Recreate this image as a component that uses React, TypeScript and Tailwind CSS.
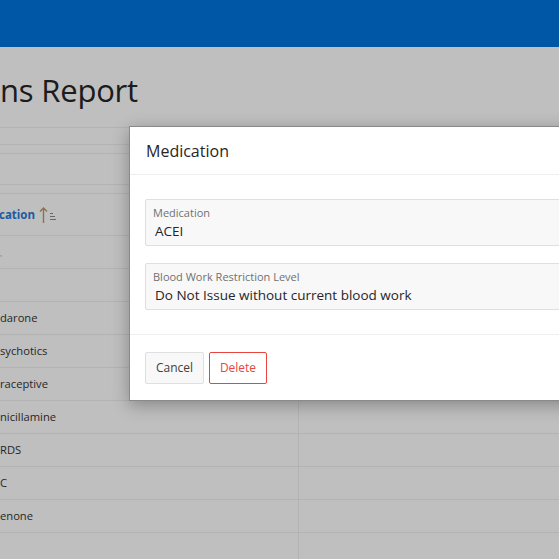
import React from "react";

const rows = ["", "", "darone", "sychotics", "raceptive", "nicillamine", "RDS", "C", "enone", ""];

const Field: React.FC<{ label: string; value: string }> = ({ label, value }) => (
  <div className="h-[47px] border border-[#dfdfdf] bg-[#f8f8f8] rounded-[2px] pl-[7px] pt-[5px]">
    <div className="text-[11px] leading-[16px] text-[#707070]">{label}</div>
    <div className="text-[13.5px] leading-[20px] text-[#262626] pl-[2px]">{value}</div>
  </div>
);

const App: React.FC = () => {
  return (
    <div
      className="relative w-[559px] h-[559px] overflow-hidden bg-white"
      style={{ fontFamily: '"Open Sans", "Noto Sans", sans-serif' }}
    >
      {/* page under the dialog */}
      <div className="h-[47px] bg-[#0074dd]" />
      <div className="h-[80px] flex items-center">
        <h1 className="text-[31px] text-[#262626] pt-[6px] tracking-[-0.2px]">ns Report</h1>
      </div>
      <div className="border-t border-[#efefef] h-[17px]" />
      <div className="border-t border-[#efefef] h-[9px]" />
      <div className="border-t border-[#efefef] h-[31px]" />
      <div className="border-t border-[#efefef] h-[9px]" />
      <div className="border-t border-[#efefef] h-[42px] flex items-center">
        <span className="text-[11.5px] font-bold text-[#2a78d5] -ml-[1px]">cation</span>
        <span className="ml-[4px] text-[#8a8a8a]">
          <svg width="20" height="18" viewBox="0 0 20 18" fill="none" stroke="currentColor" strokeWidth="1.2">
            <path d="M4.5 17V2M1 5.5L4.5 2L8 5.5" stroke="#b49a6a" strokeWidth="1.4" />
            <path d="M11 7.5h3M11 10.5h5M11 13.5h6" />
          </svg>
        </span>
      </div>
      {rows.map((r, i) => (
        <div key={i} className="flex h-[33px] border-t border-[#efefef]">
          <div className="w-[299px] border-r border-[#efefef] flex items-center text-[11.2px] text-[#333]">
            {i === 0 ? <span className="text-[#5ab3b3] text-[8px] mt-[10px]">'</span> : r}
          </div>
          <div className="flex-1" />
        </div>
      ))}

      {/* overlay */}
      <div className="absolute inset-0 bg-black/25" />

      {/* dialog */}
      <div className="absolute left-[129px] top-[126px] w-[560px] h-[275px] bg-white border border-[#8a8a8a] shadow-[0_4px_16px_rgba(0,0,0,0.3)] flex flex-col">
        <div className="h-[48px] flex items-center px-[16px] border-b border-[#eeeeee]">
          <h2 className="text-[16px] text-[#262626]">Medication</h2>
        </div>
        <div className="flex-1 px-[15px] pt-[24px] flex flex-col gap-[17px] border-b border-[#eeeeee]">
          <Field label="Medication" value="ACEI" />
          <Field label="Blood Work Restriction Level" value="Do Not Issue without current blood work" />
        </div>
        <div className="h-[65px] flex items-center gap-[5px] px-[15px]">
          <button className="h-[32px] w-[59px] bg-[#f8f8f8] border border-[#dfdfdf] rounded-[2px] text-[12px] text-[#404040]">
            Cancel
          </button>
          <button className="h-[32px] w-[58px] bg-white border border-[#e8453c] rounded-[2px] text-[12px] text-[#e8453c]">
            Delete
          </button>
        </div>
      </div>
    </div>
  );
};

export default App;
